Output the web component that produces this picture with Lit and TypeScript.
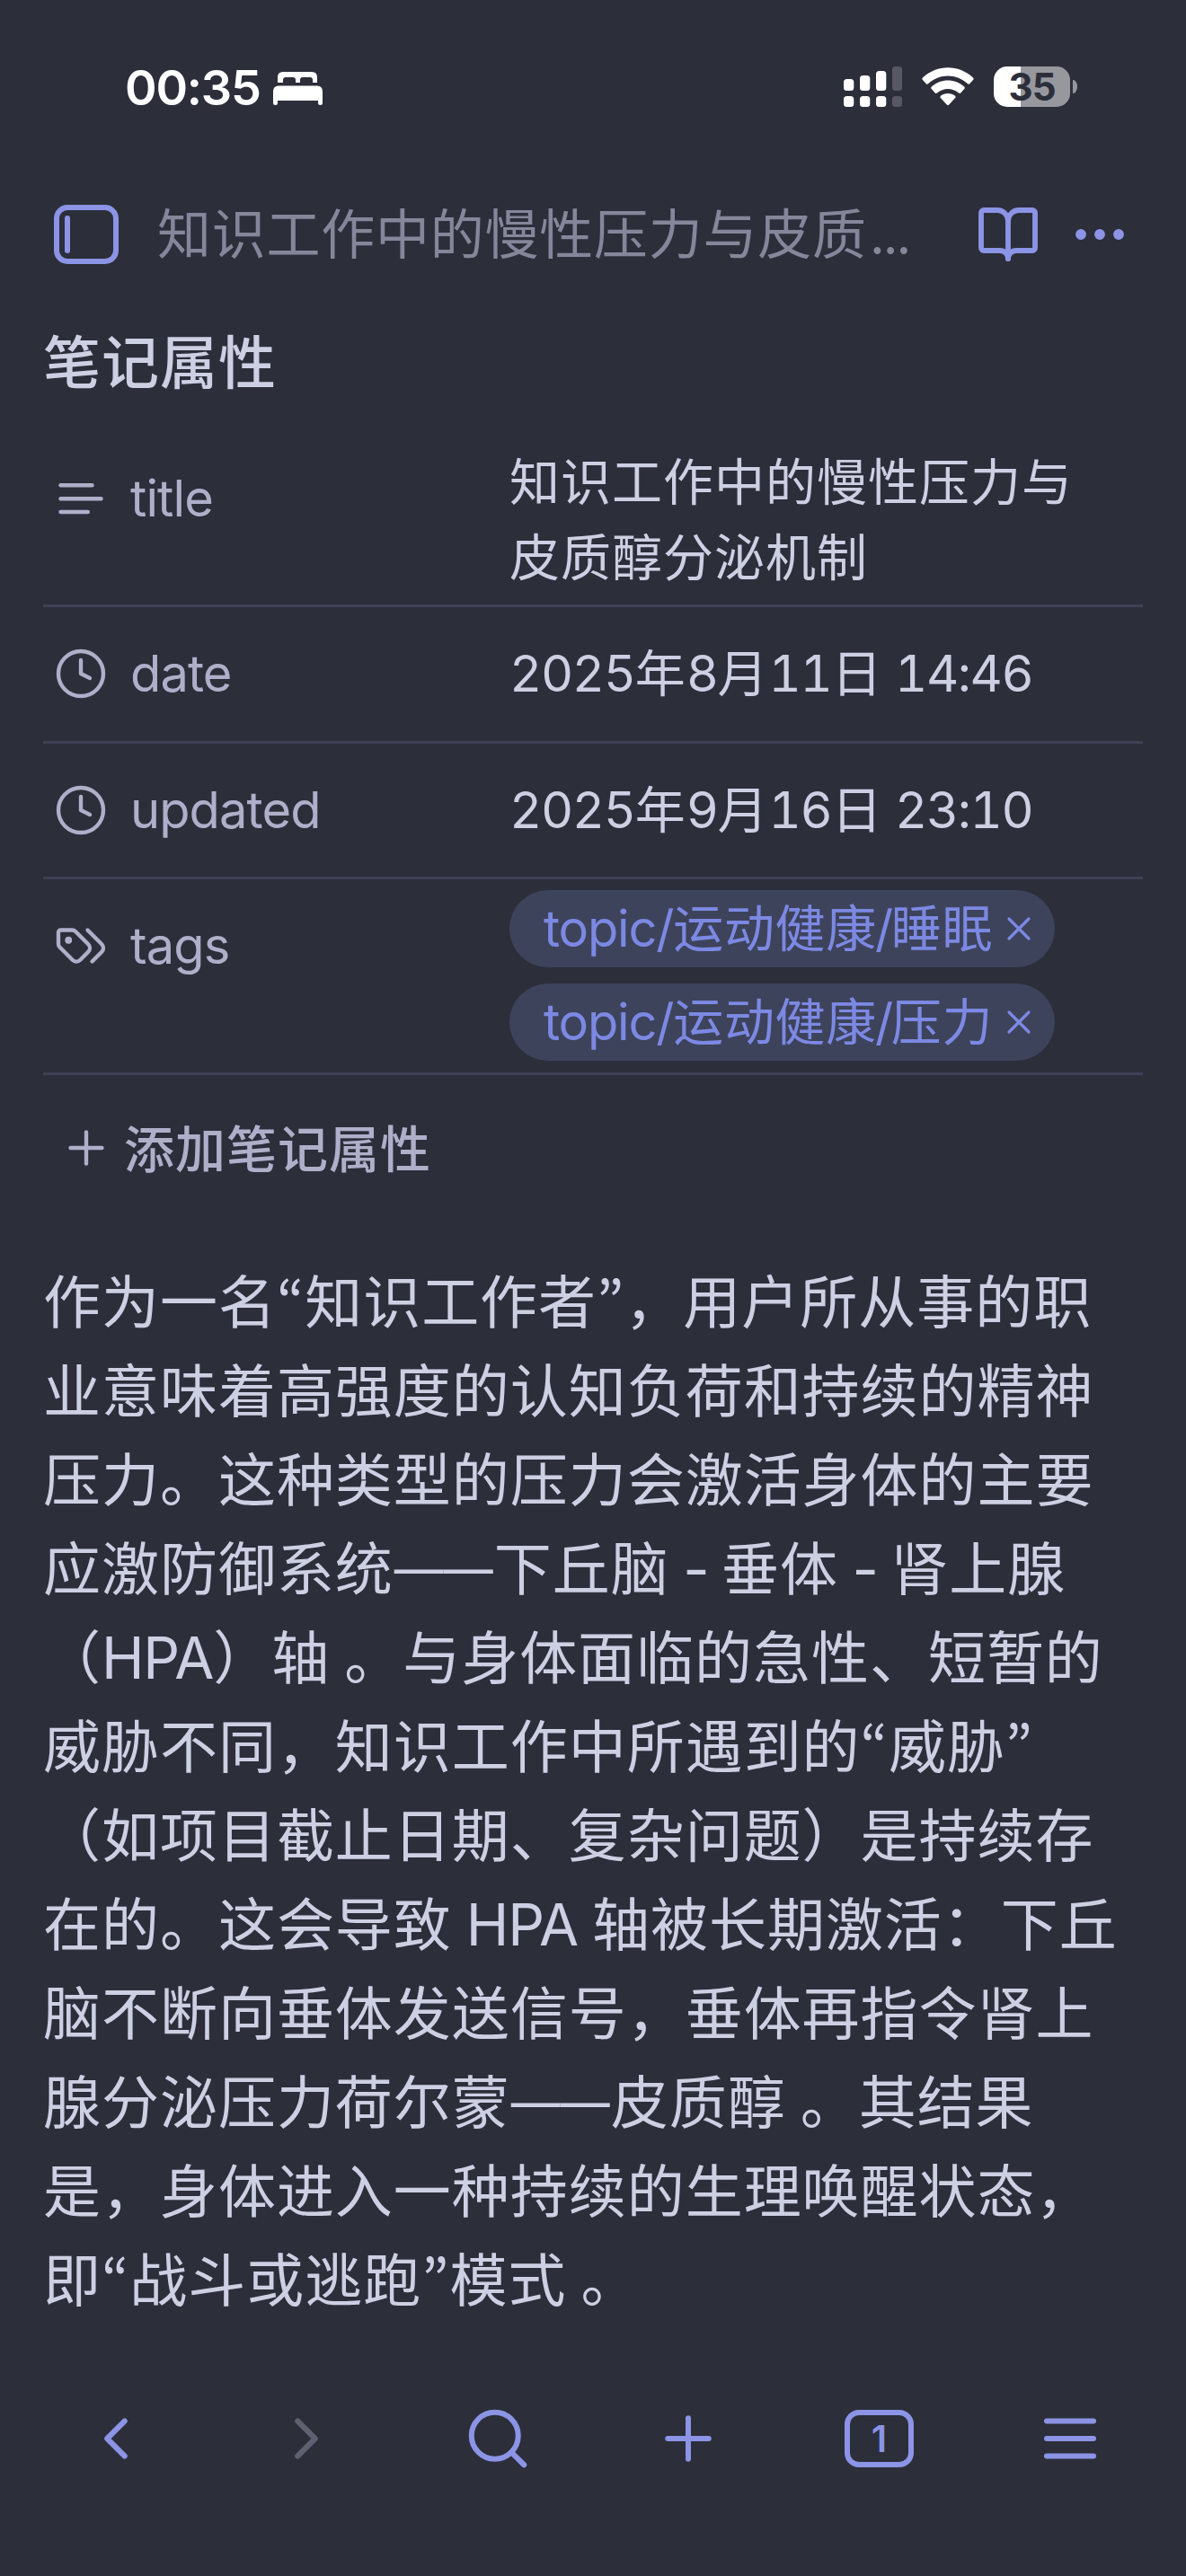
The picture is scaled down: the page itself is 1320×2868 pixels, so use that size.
import { LitElement, html, svg, css } from "lit";
import { customElement, property } from "lit/decorators.js";

const icons = {
  text: svg`<path d="M17 6.1H3"/><path d="M21 12.1H3"/><path d="M15.1 18H3"/>`,
  clock: svg`<circle cx="12" cy="12" r="10"/><path d="M12 6v6l4 2"/>`,
  tags: svg`<path d="m15 5 6.3 6.3a2.4 2.4 0 0 1 0 3.4L17 19"/><path d="M9.586 5.586A2 2 0 0 0 8.172 5H3a1 1 0 0 0-1 1v5.172a2 2 0 0 0 .586 1.414L8.29 18.29a2.426 2.426 0 0 0 3.42 0l3.58-3.58a2.426 2.426 0 0 0 0-3.42z"/><circle cx="6.5" cy="9.5" r=".7" fill="currentColor"/>`,
  plus: svg`<path d="M5 12h14"/><path d="M12 5v14"/>`,
  x: svg`<path d="M18 6 6 18"/><path d="m6 6 12 12"/>`,
  book: svg`<path d="M12 7v14"/><path d="M3 18a1 1 0 0 1-1-1V4a1 1 0 0 1 1-1h5a4 4 0 0 1 4 4 4 4 0 0 1 4-4h5a1 1 0 0 1 1 1v13a1 1 0 0 1-1 1h-6a3 3 0 0 0-3 3 3 3 0 0 0-3-3z"/>`,
  more: svg`<circle cx="5" cy="12" r="1"/><circle cx="12" cy="12" r="1"/><circle cx="19" cy="12" r="1"/>`,
  left: svg`<path d="m15 18-6-6 6-6"/>`,
  right: svg`<path d="m9 18 6-6-6-6"/>`,
  search: svg`<circle cx="11" cy="11" r="8"/><path d="m21 21-4.3-4.3"/>`,
  menu: svg`<path d="M4 6h16"/><path d="M4 12h16"/><path d="M4 18h16"/>`,
};
type IconName = keyof typeof icons;

@customElement("ui-icon")
class UiIcon extends LitElement {
  @property() name: IconName = "plus";
  static styles = css`
    :host { display: block; flex: none; width: 60px; height: 60px; }
    svg { display: block; width: 100%; height: 100%; overflow: visible; fill: none; stroke: currentColor;
      stroke-width: var(--stroke, 1.75); stroke-linecap: round; stroke-linejoin: round; }
  `;
  render() {
    return html`<svg viewBox="0 0 24 24">${icons[this.name]}</svg>`;
  }
}

@customElement("status-bar")
class StatusBar extends LitElement {
  static styles = css`
    :host { display: flex; align-items: center; height: 196px; padding: 0 121px 0 139px; color: #fff; box-sizing: border-box; }
    .time { font-size: 54px; font-weight: 600; letter-spacing: -1.2px; line-height: 60px; width: 165px; white-space: nowrap; }
    .bed { width: 55px; height: 37px; display: block; }
    .right { margin-left: auto; display: flex; align-items: center; padding-bottom: 3px; }
    svg { display: block; flex: none; }
    .signal { margin-right: 22px; }
    .wifi { margin-right: 22px; }
    .battery { display: flex; align-items: center; gap: 3px; }
    .cell { width: 85px; height: 45px; border-radius: 15px; display: flex; align-items: center; justify-content: center;
      background: linear-gradient(90deg, #fff 30px, #97989d 30px);
      color: #2c2e3a; font-size: 42px; font-weight: 700; letter-spacing: -1px; line-height: 45px; }
    .nub { width: 5px; height: 15px; border-radius: 0 5px 5px 0 / 0 8px 8px 0; background: #97989d; }
  `;
  render() {
    const tops = [14, 10, 5, 0];
    return html`
      <div class="time">00:35</div>
      <svg class="bed" viewBox="0 0 55 37" fill="#fff">
        <path d="M5 12V6Q5 0 11 0H43Q49 0 49 6V12H44V9Q44 6 41 6H33Q30 6 30 9V12H25V9Q25 6 22 6H14Q11 6 11 9V12Z"/>
        <path d="M0 22Q0 15.500 6 15.500H49Q55 15.500 55 22V34.500Q55 37 52.500 37T50 34.500V32H5V34.500Q5 37 2.500 37T0 34.500Z"/>
      </svg>
      <div class="right">
        <svg class="signal" width="65" height="45" viewBox="0 0 65 45">
          ${tops.map((t, i) => svg`
            <g fill=${i < 3 ? "#fff" : "#575863"}>
              <rect x=${i * 18} y=${t} width="11.300" height=${27 - t} rx="3.500"/>
              <rect x=${i * 18} y="33" width="11.300" height="12" rx="3.500"/>
            </g>`)}
        </svg>
        <svg class="wifi" width="58" height="43" viewBox="0 0 58 43" fill="#fff">
          <path d="M0.500 13.500Q0 12.500 1 11.500C17 -3.500 41 -3.500 57 11.500Q58 12.500 57.500 13.500L53 18.500Q52 19 51 18.300C38.500 6.500 19.500 6.500 7 18.300Q6 19 5 18.500Z"/>
          <path d="M10.300 23.500Q9.800 22.500 10.800 21.600C21 12 37 12 47.200 21.600Q48.200 22.500 47.700 23.500L43 28.800Q42 29.400 41 28.600C34 22.500 24 22.500 17 28.600Q16 29.400 15 28.800Z"/>
          <path d="M20.600 33.700Q20 32.700 21 31.800C25.500 28 32.500 28 37 31.800Q38 32.700 37.400 33.700L30 41.800Q29 42.700 28 41.800Z"/>
        </svg>
        <div class="battery"><div class="cell">35</div><div class="nub"></div></div>
      </div>`;
  }
}

@customElement("view-header")
class ViewHeader extends LitElement {
  static styles = css`
    :host { display: flex; align-items: center; height: 130px; padding: 0 60px; color: #8b94e5; box-sizing: border-box; --stroke: 1.95; }
    .sidebar { width: 72px; height: 66px; border: 6px solid currentColor; border-radius: 15px; box-sizing: border-box; display: flex; align-items: center; padding-left: 6px; flex: none; }
    .bar { width: 6px; height: 42px; border-radius: 3px; background: currentColor; }
    .title { flex: none; width: 910px; margin-left: 43px; font-size: 60px; letter-spacing: 0.75px; line-height: 80px; white-space: nowrap; color: #86869b; }
    ui-icon { width: 72px; height: 72px; }
    .book { margin-left: 1px; }
    .more { margin-left: 30px; }
    .dots { letter-spacing: -2.5px; margin-left: 3px; }
  `;
  render() {
    return html`
      <div class="sidebar"><div class="bar"></div></div>
      <div class="title">知识工作中的慢性压力与皮质<span class="dots">...</span></div>
      <ui-icon class="book" name="book"></ui-icon>
      <ui-icon class="more" name="more"></ui-icon>`;
  }
}

@customElement("property-row")
class PropertyRow extends LitElement {
  @property() icon: IconName = "text";
  @property() label = "";
  static styles = css`
    :host { display: grid; grid-template-columns: 519px 1fr; border-bottom: 3px solid #3f4053; }
    .key { display: flex; align-items: center; height: 148.500px; padding-left: 12px; gap: 25px; color: #afafca; font-size: 56px; line-height: 84px; letter-spacing: -0.9px; }
    .value { color: #cdcfe3; font-size: 56px; line-height: 84px; letter-spacing: 1px; white-space: nowrap; }
  `;
  render() {
    return html`
      <div class="key"><ui-icon name=${this.icon}></ui-icon><span>${this.label}</span></div>
      <div class="value"><slot></slot></div>`;
  }
}

@customElement("bottom-nav")
class BottomNav extends LitElement {
  static styles = css`
    :host { display: grid; grid-template-columns: repeat(6, 1fr); justify-items: center; align-items: center; height: 100px; margin: 0 23px; color: #8b94e5; --stroke: 1.85; }
    ui-icon { width: 78px; height: 78px; }
    .off { color: #606170; }
    .tabs { width: 77px; height: 64px; box-sizing: border-box; border: 6px solid currentColor; border-radius: 16px; display: flex; align-items: center; justify-content: center; font-size: 41px; font-weight: 600; line-height: 52px; }
  `;
  render() {
    return html`
      <ui-icon name="left"></ui-icon>
      <ui-icon class="off" name="right"></ui-icon>
      <ui-icon name="search"></ui-icon>
      <ui-icon name="plus"></ui-icon>
      <div class="tabs">1</div>
      <ui-icon name="menu"></ui-icon>`;
  }
}

const quote = (t: string) => html`<span class="q">“</span>${t}<span class="q">”</span>`;
const dash = html`<span class="dash">——</span>`;
const hyphen = html`<span class="hy"> - </span>`;
const stop = html`<span class="sp"> </span>。`;

@customElement("app-root")
class AppRoot extends LitElement {
  static styles = css`
    :host { display: block; width: 1320px; height: 2868px; overflow: hidden; background: #2c2e3a; color: #cdcfe3;
      font-family: Inter, "Noto Sans CJK SC", sans-serif; }
    .note { padding: 0 48px; }
    h1 { margin: 30px 0 29px; font-size: 64px; font-weight: 500; line-height: 96px; letter-spacing: 1px; }
    .two { height: 178px; padding-top: 14px; }
    .date { height: 148.500px; line-height: 148.500px; font-variant-numeric: tabular-nums; }
    .n { letter-spacing: -1.4px; }
    .tags { display: flex; flex-direction: column; align-items: flex-start; gap: 18px; padding: 12px 0 13px; }
    .pill { display: flex; align-items: center; justify-content: space-between; width: 607px; height: 86px; border-radius: 43px; box-sizing: border-box; padding: 0 18px 0 38px; background: #3e435c; color: #7c89e3; line-height: 84px; letter-spacing: 0.7px; }
    .pill .t { letter-spacing: -1.2px; }
    .pill .s { letter-spacing: -2.5px; margin-left: -2px; }
    .pill ui-icon { width: 44px; height: 44px; }
    .add { display: flex; align-items: center; gap: 12px; height: 84px; margin: 39px 0 0 18px; color: #afafca; font-size: 56px; font-weight: 500; letter-spacing: 1px; }
    .add span { line-height: 78px; padding-top: 3px; }
    .body { margin: 80px 0 0; font-size: 64px; line-height: 99px; letter-spacing: 0.97px; }
    .line { display: block; height: 99px; white-space: pre; }
    .lat { letter-spacing: -1.2px; }
    .w { margin: 0 -3px; }
    .q { font-family: "Noto Sans CJK KR", sans-serif; line-height: 0; }
    .dash { font-size: 55px; letter-spacing: 0; vertical-align: 3px; line-height: 0; margin: 0 1px; }
    .hy { letter-spacing: -2.4px; }
    .sp { letter-spacing: -2px; }
    bottom-nav { margin-top: 77px; }
  `;
  render() {
    return html`
      <status-bar></status-bar>
      <view-header></view-header>
      <main class="note">
        <h1>笔记属性</h1>
        <property-row icon="text" label="title">
          <div class="two">知识工作中的慢性压力与<br>皮质醇分泌机制</div>
        </property-row>
        <property-row icon="clock" label="date"><div class="date"><span class="n">2025</span>年<span class="n">8</span>月<span class="n">11</span>日<span class="n"> 14:46</span></div></property-row>
        <property-row icon="clock" label="updated"><div class="date"><span class="n">2025</span>年<span class="n">9</span>月<span class="n">16</span>日<span class="n"> 23:10</span></div></property-row>
        <property-row icon="tags" label="tags">
          <div class="tags">
            ${["睡眠", "压力"].map((t) => html`
              <div class="pill"><span><span class="t">topic/</span>运动健康<span class="s">/</span>${t}</span><ui-icon name="x"></ui-icon></div>`)}
          </div>
        </property-row>
        <div class="add"><ui-icon name="plus"></ui-icon><span>添加笔记属性</span></div>
        <p class="body">
          <span class="line">作为一名${quote("知识工作者")}，用户所从事的职</span>
          <span class="line">业意味着高强度的认知负荷和持续的精神</span>
          <span class="line">压力。这种类型的压力会激活身体的主要</span>
          <span class="line">应激防御系统${dash}下丘脑${hyphen}垂体${hyphen}肾上腺</span>
          <span class="line">（<span class="lat">HPA</span>）轴${stop}与身体面临的急性、短暂的</span>
          <span class="line">威胁不同，知识工作中所遇到的${quote("威胁")}</span>
          <span class="line">（如项目截止日期、复杂问题）是持续存</span>
          <span class="line">在的。这会导致 <span class="lat w">HPA</span> 轴被长期激活：下丘</span>
          <span class="line">脑不断向垂体发送信号，垂体再指令肾上</span>
          <span class="line">腺分泌压力荷尔蒙${dash}皮质醇${stop}其结果</span>
          <span class="line">是，身体进入一种持续的生理唤醒状态，</span>
          <span class="line">即${quote("战斗或逃跑")}模式${stop}</span>
        </p>
      </main>
      <bottom-nav></bottom-nav>`;
  }
}
